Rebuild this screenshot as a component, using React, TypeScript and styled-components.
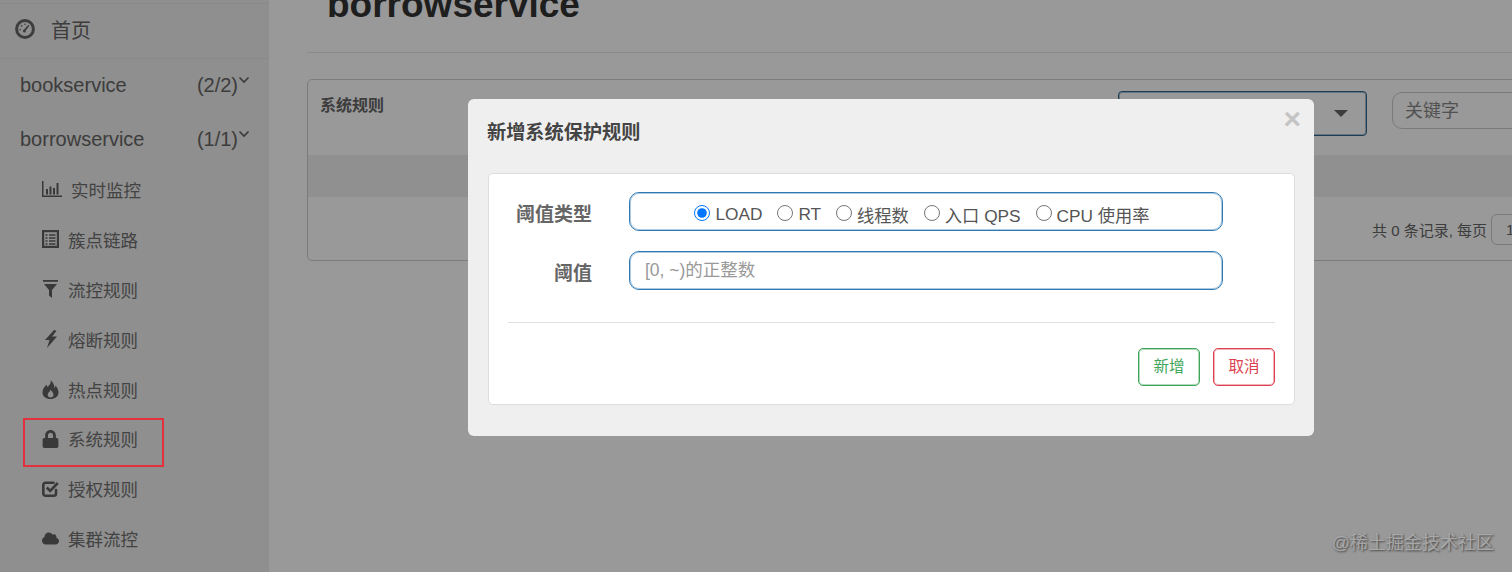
import React from 'react'
import styled, { createGlobalStyle } from 'styled-components'
import { FaCloud, FaLock } from 'react-icons/fa'

const FONT = `"Liberation Sans", "Noto Sans CJK SC", sans-serif`

const GlobalStyle = createGlobalStyle`
  html, body {
    margin: 0;
    padding: 0;
    background: #fff;
    font-family: ${FONT};
  }
`

const Page = styled.div`
  position: relative;
  display: flex;
  width: 1512px;
  height: 572px;
  overflow: hidden;
  background: #fff;
`

const Sidebar = styled.aside`
  flex: 0 0 269px;
  padding-top: 3px;
  background: #eeeeee;
  color: #666;
`

const HomeRow = styled.div`
  display: flex;
  align-items: center;
  height: 50px;
  padding: 0 0 4px 15px;
  border-top: 1px solid #e4e4e4;
  border-bottom: 1px solid #e4e4e4;
  font-size: 20px;
`

const HomeLabel = styled.span`
  margin-left: 16px;
`

const ServiceRow = styled.div`
  display: flex;
  align-items: center;
  height: 52px;
  padding: 0 19px 2px 20px;
  font-size: 20px;
`

const ServiceName = styled.span`
  flex: 1;
`

const Chevron = styled.svg`
  width: 12px;
  height: 8px;
  margin: -10px 0 0 0;
`

const SubList = styled.div`
  padding-top: 1px;
`

const SubItem = styled.div`
  display: flex;
  align-items: center;
  height: 42.9px;
  padding: 0 0 7px 42px;
  font-size: 17.5px;
  color: #707070;
`

const IconBox = styled.span<{ $w: number }>`
  display: flex;
  align-items: center;
  justify-content: center;
  width: ${({ $w }) => $w}px;
  margin-right: 9px;
  color: #606060;
`

const Main = styled.main`
  flex: 1;
  min-width: 0;
  padding-left: 38px;
`

const PageTitle = styled.h1`
  margin: -21px 0 0 20px;
  padding-bottom: 21px;
  height: 52px;
  box-sizing: content-box;
  font-size: 37px;
  line-height: 52px;
  font-weight: 700;
  color: #333;
`

const Rule = styled.div`
  height: 1px;
  background: #e6e6e6;
`

const Panel = styled.section`
  width: 1289px;
  height: 180px;
  margin-top: 26px;
  border: 1px solid #cfcfcf;
  border-radius: 5px;
`

const PanelHead = styled.div`
  display: flex;
  align-items: flex-start;
  height: 75px;
  padding: 11px 15px 0 12px;
  box-sizing: border-box;
`

const PanelTitle = styled.span`
  flex: 1;
  margin-top: 1px;
  font-size: 16px;
  font-weight: 700;
  color: #666;
`

const SelectBox = styled.div`
  display: flex;
  align-items: center;
  justify-content: flex-end;
  width: 249px;
  height: 45px;
  padding-right: 18px;
  box-sizing: border-box;
  border: 1px solid #2f6690;
  box-shadow: inset 0 0 0 1px rgba(47, 102, 144, 0.4);
  border-radius: 4px;
`

const Caret = styled.span`
  width: 0;
  height: 0;
  border-left: 7px solid transparent;
  border-right: 7px solid transparent;
  border-top: 7px solid #666;
`

const SearchBox = styled.div`
  display: flex;
  align-items: center;
  width: 190px;
  height: 37px;
  margin: 1px 0 0 25px;
  padding: 0 0 4px 12px;
  box-sizing: border-box;
  border: 1px solid #ccc;
  border-radius: 10px;
  font-size: 18px;
  color: #888;
`

const StripeRow = styled.div`
  height: 42px;
  background: #f0f0f0;
`

const PanelFoot = styled.div`
  display: flex;
  align-items: center;
  justify-content: flex-start;
  height: 62px;
  padding: 3px 0 0 1064px;
  box-sizing: border-box;
  font-size: 15px;
  color: #666;
`

const PageSize = styled.span`
  width: 60px;
  height: 31px;
  margin-left: 4px;
  padding-left: 14px;
  box-sizing: border-box;
  border: 1px solid #ccc;
  border-radius: 6px;
  line-height: 29px;
`

const Overlay = styled.div`
  position: absolute;
  inset: 0;
  background: rgba(0, 0, 0, 0.4);
`

const Modal = styled.div`
  position: absolute;
  left: 468px;
  top: 99px;
  width: 846px;
  height: 337px;
  padding: 0 19px 0 20px;
  box-sizing: border-box;
  background: #efefef;
  border-radius: 6px;
`

const ModalHead = styled.div`
  display: flex;
  align-items: flex-start;
  justify-content: space-between;
  height: 74px;
`

const ModalTitle = styled.h3`
  margin: 21px 0 0 -1px;
  font-size: 19.2px;
  line-height: 26px;
  font-weight: 700;
  color: #444;
`

const CloseMark = styled.span`
  margin: 4px -6px 0 0;
  font-size: 30px;
  line-height: 32px;
  font-weight: 700;
  color: #c4c4c4;
`

const ModalCard = styled.div`
  height: 232px;
  padding-top: 18px;
  box-sizing: border-box;
  background: #fff;
  border: 1px solid #ddd;
  border-radius: 5px;
`

const FieldRow = styled.div`
  display: flex;
  align-items: center;
  height: 39px;
  margin-bottom: 20px;
`

const FieldLabel = styled.label`
  width: 103px;
  margin: 2px 37px 0 0;
  text-align: right;
  font-size: 19px;
  font-weight: 700;
  color: #666;
`

const RadioGroup = styled.div`
  display: flex;
  align-items: center;
  justify-content: center;
  width: 594px;
  height: 39px;
  padding: 6px 8px 0 0;
  box-sizing: border-box;
  border: 1px solid #2f7ab5;
  box-shadow: inset 0 0 0 1px rgba(47, 122, 181, 0.4);
  border-radius: 10px;
  font-size: 17.25px;
  color: #555;
`

const RadioLabel = styled.label`
  display: flex;
  align-items: center;
  margin-right: 15px;

  &:last-child {
    margin-right: 0;
  }
`

const RadioInput = styled.input`
  width: 16px;
  height: 16px;
  margin: 0 5px 3px 0;
`

const TextInput = styled.input`
  width: 594px;
  height: 39px;
  padding: 0 15px;
  box-sizing: border-box;
  border: 1px solid #2f7ab5;
  box-shadow: inset 0 0 0 1px rgba(47, 122, 181, 0.4);
  border-radius: 10px;
  outline: none;
  font-family: ${FONT};
  font-size: 17.5px;

  &::placeholder {
    color: #999;
  }
`

const Divider = styled.div`
  height: 1px;
  margin: 32px 19px 0;
  background: #e0e0e0;
`

const Actions = styled.div`
  display: flex;
  justify-content: flex-end;
  gap: 13px;
  margin: 25px 19px 0 0;
`

const ActionButton = styled.button<{ $color: string }>`
  width: 62px;
  height: 38px;
  padding: 0 0 4px;
  background: #fff;
  border: 1px solid ${({ $color }) => $color};
  box-shadow: inset 0 0 0 1px ${({ $color }) => $color}66;
  border-radius: 5px;
  font-family: ${FONT};
  font-size: 15.5px;
  color: ${({ $color }) => $color};
`

const Callout = styled.div`
  position: absolute;
  left: 23px;
  top: 418px;
  width: 141px;
  height: 49px;
  box-sizing: border-box;
  border: 2px solid #e2303c;
`

const Watermark = styled.div`
  position: absolute;
  right: 18px;
  bottom: 17px;
  font-size: 18px;
  line-height: 24px;
  color: rgba(175, 175, 175, 0.9);
  text-shadow: 1px 1px 2px rgba(50, 50, 50, 0.85);
`

const GaugeIcon = () => (
  <svg width="20" height="20" viewBox="0 0 20 20" fill="none">
    <circle cx="10" cy="10" r="8.4" stroke="#666" strokeWidth="3" />
    <path d="M5.2 10.5v.1M6.5 6.8l.1.1M10 5.2v.1M13.5 6.8l-.1.1" stroke="#666" strokeWidth="1.6" strokeLinecap="round" />
    <path d="M9.4 11.6L12.4 8" stroke="#666" strokeWidth="1.8" strokeLinecap="round" />
    <circle cx="9.4" cy="12" r="1.5" fill="#666" />
  </svg>
)

const StatsIcon = () => (
  <svg width="20" height="16" viewBox="0 0 20 16" fill="#606060">
    <rect x="0" y="0" width="1.5" height="16" />
    <rect x="0" y="14.5" width="20" height="1.5" />
    <rect x="4" y="8" width="2" height="5.5" />
    <rect x="7.5" y="5.5" width="2" height="8" />
    <rect x="11" y="7" width="2" height="6.5" />
    <rect x="14.5" y="2" width="2" height="11.5" />
  </svg>
)

const ListIcon = () => (
  <svg width="17" height="18" viewBox="0 0 17 18" fill="none" stroke="#606060">
    <rect x="1.1" y="1.1" width="14.8" height="15.8" strokeWidth="2.2" />
    <path d="M3.5 5h2M7 5h6.5M3.5 8h2M7 8h6.5M3.5 11h2M7 11h6.5M3.5 14h2M7 14h6.5" strokeWidth="1.3" />
  </svg>
)

const FilterIcon = () => (
  <svg width="17" height="18" viewBox="0 0 17 18" fill="#606060">
    <path d="M1 0h15v1.8H1z" />
    <path d="M2 4h13l-5 6v8l-3-2.5V10z" />
  </svg>
)

const BoltIcon = () => (
  <svg width="14" height="18" viewBox="0 0 14 18" fill="#606060">
    <path d="M10 0L1 10h4.5L3 18l10-11.5H8.2L12.5 .8z" />
  </svg>
)

const FireIcon = () => (
  <svg width="17" height="19" viewBox="0 0 17 19" fill="#606060">
    <path
      fillRule="evenodd"
      d="M8.5 0c1 3-1 5-3 7-.5-1-.8-1.500-1-2.500C2.200 7 .5 9.500 .5 12.500 .5 16.500 4 19 8.500 19s8-2.500 8-6.500c0-3-1.500-5.200-3-7 0 1-.3 2-1 2.700C12.500 5 11 2 8.500 0zM8.800 9.500c.3 1.500 2.700 3 2.700 5.200 0 1.700-1.200 2.800-2.900 2.800S5.700 16.400 5.700 14.700C5.700 12.500 8.500 11.500 8.800 9.500z"
    />
  </svg>
)

const CheckIcon = () => (
  <svg width="17" height="17" viewBox="0 0 17 17" fill="none" stroke="#606060" strokeWidth="2.6">
    <path d="M14 10v3.500a2.200 2.200 0 0 1-2.200 2.200H3.500a2.200 2.200 0 0 1-2.200-2.200V5a2.200 2.200 0 0 1 2.200-2.200h8" strokeLinecap="round" />
    <path d="M4.800 7.500l3.400 3.400L15.800 3" />
  </svg>
)

const ChevronDown = () => (
  <Chevron viewBox="0 0 12 8" fill="none">
    <path d="M1.500 1.500L6 6l4.500-4.500" stroke="#606060" strokeWidth="1.6" />
  </Chevron>
)

const services = [
  { name: 'bookservice', count: '(2/2)' },
  { name: 'borrowservice', count: '(1/1)' },
]

const subItems = [
  { label: '实时监控', width: 20, icon: <StatsIcon /> },
  { label: '簇点链路', width: 17, icon: <ListIcon /> },
  { label: '流控规则', width: 17, icon: <FilterIcon /> },
  { label: '熔断规则', width: 17, icon: <BoltIcon /> },
  { label: '热点规则', width: 17, icon: <FireIcon /> },
  { label: '系统规则', width: 17, icon: <FaLock size={18} /> },
  { label: '授权规则', width: 17, icon: <CheckIcon /> },
  { label: '集群流控', width: 17, icon: <FaCloud size={19} /> },
]

const radios = ['LOAD', 'RT', '线程数', '入口 QPS', 'CPU 使用率']

export default function App() {
  return (
    <Page>
      <GlobalStyle />
      <Sidebar>
        <HomeRow>
          <GaugeIcon />
          <HomeLabel>首页</HomeLabel>
        </HomeRow>
        {services.map((s) => (
          <ServiceRow key={s.name}>
            <ServiceName>{s.name}</ServiceName>
            <span>{s.count}</span>
            <ChevronDown />
          </ServiceRow>
        ))}
        <SubList>
          {subItems.map((item) => (
            <SubItem key={item.label}>
              <IconBox $w={item.width}>{item.icon}</IconBox>
              {item.label}
            </SubItem>
          ))}
        </SubList>
      </Sidebar>
      <Main>
        <PageTitle>borrowservice</PageTitle>
        <Rule />
        <Panel>
          <PanelHead>
            <PanelTitle>系统规则</PanelTitle>
            <SelectBox>
              <Caret />
            </SelectBox>
            <SearchBox>关键字</SearchBox>
          </PanelHead>
          <StripeRow />
          <PanelFoot>
            共 0 条记录, 每页
            <PageSize>10</PageSize>
          </PanelFoot>
        </Panel>
      </Main>
      <Overlay />
      <Callout />
      <Modal>
        <ModalHead>
          <ModalTitle>新增系统保护规则</ModalTitle>
          <CloseMark>×</CloseMark>
        </ModalHead>
        <ModalCard>
          <FieldRow>
            <FieldLabel>阈值类型</FieldLabel>
            <RadioGroup>
              {radios.map((r, i) => (
                <RadioLabel key={r}>
                  <RadioInput type="radio" name="grade" defaultChecked={i === 0} />
                  {r}
                </RadioLabel>
              ))}
            </RadioGroup>
          </FieldRow>
          <FieldRow>
            <FieldLabel>阈值</FieldLabel>
            <TextInput placeholder="[0, ~)的正整数" />
          </FieldRow>
          <Divider />
          <Actions>
            <ActionButton $color="#3fa65a">新增</ActionButton>
            <ActionButton $color="#dc3f50">取消</ActionButton>
          </Actions>
        </ModalCard>
      </Modal>
      <Watermark>@稀土掘金技术社区</Watermark>
    </Page>
  )
}
